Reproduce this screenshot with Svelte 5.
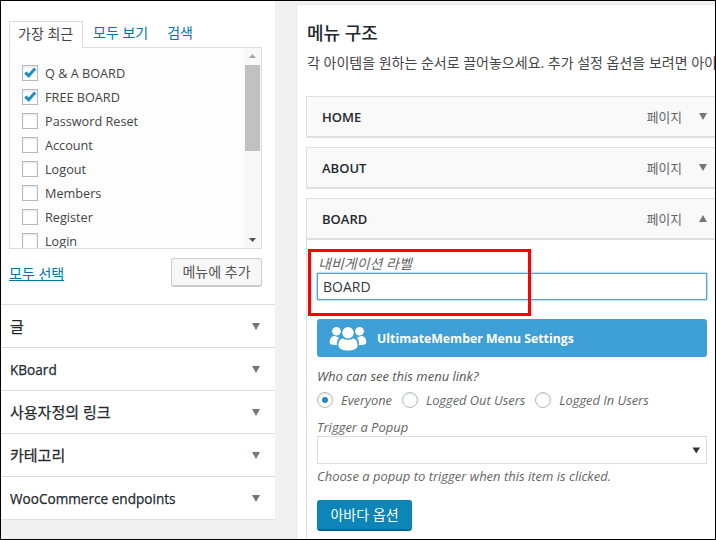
<script>
  const items = [
    ['Q & A BOARD', true], ['FREE BOARD', true], ['Password Reset', false], ['Account', false],
    ['Logout', false], ['Members', false], ['Register', false], ['Login', false]
  ];
  const sections = [['글', true], ['KBoard', false], ['사용자정의 링크', true], ['카테고리', true], ['WooCommerce endpoints', false]];
  const menu = [['HOME', false], ['ABOUT', false], ['BOARD', true]];
</script>

<div class="frame">
  <aside class="left">
    <div class="top">
      <div class="tabs">
        <span class="tab active">가장 최근</span>
        <span class="tab">모두 보기</span>
        <span class="tab search">검색</span>
      </div>
      <div class="listbox">
        <div class="list">
          {#each items as [label, checked]}
            <div class="row">
              <span class="cb">
                {#if checked}
                  <svg width="16" height="16" viewBox="0 0 16 16"><path d="M2.2 8.4 L4.4 6.4 L6.6 8.6 L12.2 2.6 L14.2 4.6 L6.7 13 Z" fill="#1e8cbe"/></svg>
                {/if}
              </span>
              <span>{label}</span>
            </div>
          {/each}
        </div>
        <div class="scroll">
          <svg class="arrow" width="17" height="17" viewBox="0 0 17 17"><path d="M5 10 L8.5 6 L12 10 Z" fill="#a3a3a3"/></svg>
          <div class="track"><div class="thumb"></div></div>
          <svg class="arrow" width="17" height="17" viewBox="0 0 17 17"><path d="M5 7 L12 7 L8.5 11 Z" fill="#505050"/></svg>
        </div>
      </div>
      <div class="actions">
        <span class="link">모두 선택</span>
        <span class="btn">메뉴에 추가</span>
      </div>
    </div>
    {#each sections as [s, ko]}
      <div class="section">
        <span class:ko>{s}</span>
        <i class="tri"></i>
      </div>
    {/each}
  </aside>

  <main class="right">
    <h3>메뉴 구조</h3>
    <p class="desc">각 아이템을 원하는 순서로 끌어놓으세요. 추가 설정 옵션을 보려면 아이템 오른쪽의 화살표를 클릭하세요.</p>
    {#each menu as [name, open]}
      <div class="item" class:open>
        <b>{name}</b>
        <span class="type">페이지</span>
        <i class="tri" class:up={open}></i>
      </div>
    {/each}
    <div class="settings">
      <label class="nav-label" for="nav">내비게이션 라벨</label>
      <input id="nav" class="nav-input" value="BOARD" />
      <div class="um">
        <svg width="38" height="25" viewBox="0 0 38 26" fill="#fff">
          <circle cx="7" cy="5.5" r="4.5"/><circle cx="31" cy="5.5" r="4.5"/>
          <path d="M0 17 C0 12 3 10 6 10.5 C8 12 9 12 10 12 C8 14 7 17 7.5 20 C3 20 0 19.5 0 17 Z"/>
          <path d="M38 17 C38 12 35 10 32 10.5 C30 12 29 12 28 12 C30 14 31 17 30.500 20 C35 20 38 19.500 38 17 Z"/>
          <circle cx="19" cy="7" r="6"/>
          <path d="M9 20 C9 16 11 13 14 13 C16.500 15 21.500 15 24 13 C27 13 29 16 29 20 C29 24 24 25.500 19 25.500 C14 25.500 9 24 9 20 Z"/>
        </svg>
        <span>UltimateMember Menu Settings</span>
      </div>
      <div class="who">Who can see this menu link?</div>
      <div class="radios">
        <span class="radio"><i class="r on"></i>Everyone</span>
        <span class="radio"><i class="r"></i>Logged Out Users</span>
        <span class="radio"><i class="r"></i>Logged In Users</span>
      </div>
      <div class="trig">Trigger a Popup</div>
      <div class="select"><svg width="9" height="7" viewBox="0 0 9 7"><path d="M0.500 0.500 L8 0.500 L4.250 6.500 Z" fill="#333"/></svg></div>
      <div class="hint">Choose a popup to trigger when this item is clicked.</div>
      <span class="primary">아바다 옵션</span>
    </div>
  </main>

  <div class="redbox"></div>
</div>

<style>
  :global(body) { margin: 0; }
  .frame {
    position: relative;
    box-sizing: border-box;
    width: 716px;
    height: 540px;
    border: 1px solid #000;
    overflow: hidden;
    background: #f1f1f1;
    display: flex;
    align-items: flex-start;
    font-family: "Open Sans", "Noto Sans CJK KR", sans-serif;
    font-size: 13px;
    color: #444;
  }
  .left {
    width: 274px;
    flex: none;
    background: #fff;
    box-shadow: 0 1px 1px rgba(0,0,0,.06);
  }
  .top { padding: 20px 13px 16px 8px; height: 303px; box-sizing: border-box; }
  .tabs { display: flex; height: 26px; }
  .tab {
    padding: 2px 10px 0 10px;
    box-sizing: border-box;
    height: 26px;
    line-height: 20px;
    color: #0073aa;
    font-size: 14px;
  }
  .tab.search { padding-left: 9px; }
  .tab.active {
    width: 74px;
    padding-left: 8px;
    color: #444;
    border: 1px solid #ddd;
    border-bottom: none;
    background: #fff;
    position: relative;
    z-index: 1;
    height: 27px;
    white-space: nowrap;
  }
  .listbox {
    box-sizing: border-box;
    width: 253px;
    height: 202px;
    border: 1px solid #ddd;
    display: flex;
    background: #fdfdfd;
  }
  .list { flex: 1; padding: 13px 0 0 12px; overflow: hidden; font-size: 12.7px; }
  .row { display: flex; align-items: center; gap: 7px; height: 24px; white-space: nowrap; }
  .cb {
    width: 16px; height: 16px; flex: none;
    box-sizing: border-box;
    border: 1px solid #b4b9be;
    background: #fff;
    box-shadow: inset 0 1px 2px rgba(0,0,0,.1);
    display: flex;
  }
  .cb svg { margin: -1px; flex: none; }
  .scroll { width: 17px; flex: none; background: #f8f8f8; display: flex; flex-direction: column; }
  .arrow { flex: none; display: block; }
  .track { flex: 1; }
  .thumb { height: 86px; margin: 0 1px; background: #c1c1c1; }
  .actions { display: flex; justify-content: space-between; align-items: center; margin-top: 9px; }
  .link { color: #0073aa; text-decoration: underline; font-size: 14px; }
  .btn {
    box-sizing: border-box;
    width: 91px; height: 29px;
    border: 1px solid #ccc;
    border-bottom-width: 2px;
    border-radius: 3px;
    background: #f7f7f7;
    color: #555;
    text-align: center;
    line-height: 25px;
    font-size: 14px;
  }
  .section {
    height: 43px;
    box-sizing: border-box;
    border-top: 1px solid #ddd;
    padding: 0 15px 0 9px;
    display: flex;
    justify-content: space-between;
    align-items: center;
    color: #23282d;
    font-size: 13.6px;
    font-weight: 400;
    -webkit-text-stroke: 0.25px #23282d;
    line-height: 21px;
  }
  .section .ko { font-size: 15px; font-weight: 400; }
  .tri {
    display: block;
    width: 0; height: 0;
    border-left: 4px solid transparent;
    border-right: 4px solid transparent;
    border-top: 7px solid #72777c;
  }
  .tri.up { border-top: none; border-bottom: 7px solid #72777c; }
  .right {
    margin: 3px 0 0 21px;
    flex: none;
    width: 419px;
    height: 540px;
    box-sizing: border-box;
    background: #fff;
    border-top: 1px solid #e5e5e5;
    border-left: 1px solid #e5e5e5;
    padding-left: 10px;
    overflow: hidden;
  }
  h3 {
    margin: 0;
    padding-top: 16px;
    font-size: 18px;
    line-height: 24px;
    height: 24px;
    font-weight: 500;
    color: #23282d;
  }
  .desc {
    margin: 8px 0 23px;
    line-height: 20px;
    font-size: 14px;
    white-space: nowrap;
    color: #444;
    overflow: hidden;
    width: 408px;
  }
  .item {
    box-sizing: border-box;
    height: 42px;
    width: 420px;
    border: 1px solid #dfdfdf;
    border-bottom-width: 2px;
    background: #f9f9f9;
    display: flex;
    align-items: center;
    padding: 0 0 0 15px;
    margin: 0 0 9px -1px;
    color: #23282d;
    position: relative;
  }
  .item b { font-weight: 600; font-size: 13px; flex: 1; }
  .type { font-size: 12.75px; color: #666; margin-right: 17px; }
  .item .tri { margin-right: 18px; }
  .item.open { margin-bottom: 0; }
  .settings {
    box-sizing: border-box;
    border-left: 1px solid #dfdfdf;
    width: 420px;
    height: 300px;
    margin-left: -1px;
    padding: 14px 0 0 10px;
  }
  .nav-label {
    display: block;
    box-sizing: border-box;
    font-style: italic;
    font-size: 14px;
    line-height: 18px;
    color: #666;
    padding: 1px 0 0 1px;
    height: 19px;
  }
  .nav-input {
    display: block;
    box-sizing: border-box;
    width: 390px;
    height: 27px;
    border: 1px solid #5b9dd9;
    box-shadow: 0 0 2px rgba(30,140,190,.8);
    outline: none;
    padding: 0 5px;
    font: inherit;
    font-size: 14px;
    color: #32373c;
    background: #fff;
    border-radius: 0;
    margin-bottom: 19px;
  }
  .um {
    box-sizing: border-box;
    width: 390px;
    height: 38px;
    border-radius: 3px;
    background: #3ea0d6;
    color: #fff;
    font-weight: 700;
    font-size: 12.3px;
    display: flex;
    align-items: center;
    gap: 10px;
    padding: 0 0 0 12px;
  }
  .who, .trig, .hint { font-style: italic; color: #666; line-height: 18px; font-size: 13px; }
  .who { margin-top: 10px; color: #555; }
  .radios { display: flex; margin-top: 6px; height: 18px; align-items: center; font-style: italic; color: #666; font-size: 12.85px; }
  .radio { display: flex; align-items: center; gap: 8px; margin-right: 10px; white-space: nowrap; }
  .r {
    display: flex; align-items: center; justify-content: center;
    box-sizing: border-box;
    width: 16px; height: 16px;
    border: 1px solid #b4b9be;
    border-radius: 50%;
    background: #fff;
    box-shadow: inset 0 1px 2px rgba(0,0,0,.1);
  }
  .r.on::before { content: ""; width: 6px; height: 6px; border-radius: 50%; background: #1e8cbe; }
  .trig { margin-top: 9px; }
  .select {
    box-sizing: border-box;
    width: 390px;
    height: 28px;
    border: 1px solid #ddd;
    background: #fff;
    display: flex;
    align-items: center;
    justify-content: flex-end;
    padding-right: 5px;
  }
  .hint { margin-top: 3px; }
  .primary {
    display: block;
    margin-top: 15px;
    box-sizing: border-box;
    width: 95px;
    height: 31px;
    border: 1px solid #0a7fb0;
    border-bottom: 2px solid #006799;
    border-radius: 3px;
    background: #0d85b7;
    color: #fff;
    text-align: center;
    line-height: 27px;
    font-size: 14px;
  }
  .redbox {
    position: absolute;
    left: 307px;
    top: 248px;
    width: 223px;
    height: 67px;
    box-sizing: border-box;
    border: 3px solid #f00;
    z-index: 5;
  }
</style>
